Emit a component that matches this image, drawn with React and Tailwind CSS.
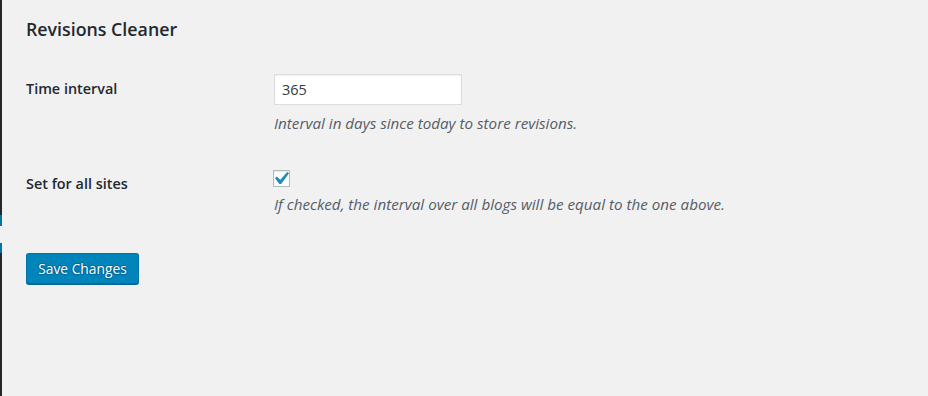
export default function App() {
  const font = { fontFamily: '"Open Sans", "Noto Sans", "Liberation Sans", sans-serif' };
  return (
    <div className="w-[928px] h-[396px] bg-[#f1f1f1] flex overflow-hidden" style={font}>
      <div className="w-[2px] flex flex-col shrink-0">
        <div className="h-[215px] bg-[#23282d]" />
        <div className="h-[11px] bg-[#0073aa]" />
        <div className="h-[17px] bg-[#f1f1f1]" />
        <div className="h-[10px] bg-[#0073aa]" />
        <div className="flex-1 bg-[#23282d]" />
      </div>
      <div className="flex-1 pl-[24px] text-[#23282d]">
        <h2 className="mt-[17px] text-[17.8px] leading-[24px] font-semibold">Revisions Cleaner</h2>
        <div className="flex mt-[33px]">
          <div className="w-[248px] pt-[5px] text-[14.4px] leading-[20px] font-semibold">Time interval</div>
          <div className="flex flex-col">
            <div className="w-[188px] h-[31px] bg-white border border-[#ddd] shadow-[inset_0_1px_2px_rgba(0,0,0,0.07)] px-[7px] flex items-center text-[14.5px] text-[#32373c]">365</div>
            <p className="mt-[8px] text-[15.2px] leading-[20px] italic text-[#555d66]">Interval in days since today to store revisions.</p>
          </div>
        </div>
        <div className="flex mt-[37px]">
          <div className="w-[248px] pt-[4px] text-[14.4px] leading-[20px] font-semibold">Set for all sites</div>
          <div className="flex flex-col">
            <div className="relative ml-[-1px] w-[17px] h-[17px] bg-white border border-[#b4b9be] shadow-[inset_0_1px_2px_rgba(0,0,0,0.1)]">
              <svg className="absolute left-0 top-0 overflow-visible" width="15" height="15" viewBox="0 0 15 15">
                <path d="M13.2 1L15 2.2 7.2 13.1H5.4L1 7.2 2.8 5.6 6.3 8.7z" fill="#1e8cbe" />
              </svg>
            </div>
            <p className="mt-[7px] text-[15.2px] leading-[20px] italic text-[#555d66]">If checked, the interval over all blogs will be equal to the one above.</p>
          </div>
        </div>
        <button className="mt-[39px] h-[31px] w-[113px] rounded-[3px] bg-[#0085ba] border border-[#0073aa] border-b-[#006799] shadow-[0_1px_0_#006799] text-white text-[13.8px] leading-[28px] [text-shadow:0_-1px_1px_#006799,1px_0_1px_#006799,0_1px_1px_#006799,-1px_0_1px_#006799]">Save Changes</button>
      </div>
    </div>
  );
}
